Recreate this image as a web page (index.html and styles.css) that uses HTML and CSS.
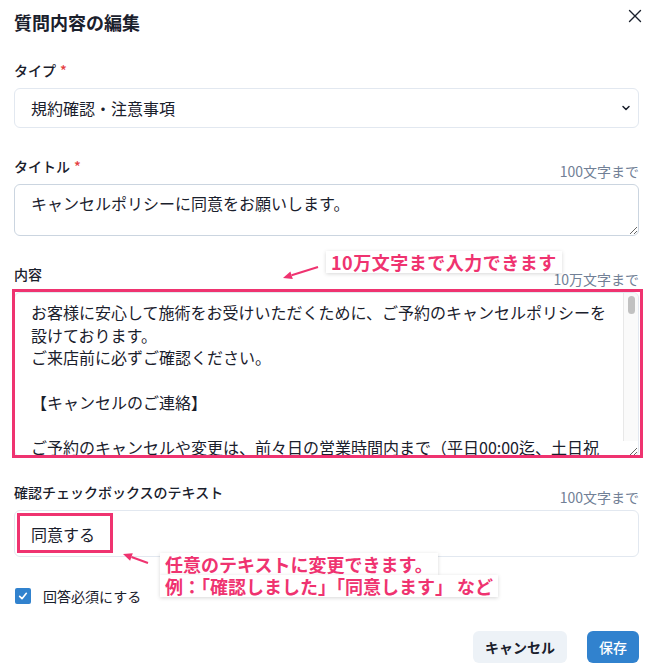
FILE: index.html
```html
<!DOCTYPE html>
<html lang="ja">
<head>
<meta charset="utf-8">
<title>質問内容の編集</title>
<link rel="stylesheet" href="styles.css">
</head>
<body>
<div class="modal">
  <header class="modal-header">
    <h2 class="modal-title">質問内容の編集</h2>
    <button class="close" aria-label="閉じる">
      <svg width="14" height="14" viewBox="0 0 14 14"><path d="M1.5 1.5 L12.5 12.5 M12.5 1.5 L1.5 12.5" stroke="#1a202c" stroke-width="1.4" fill="none" stroke-linecap="round"/></svg>
    </button>
  </header>

  <div class="field field-first">
    <div class="label-row"><span class="label">タイプ<span class="req">*</span></span></div>
    <div class="select">
      <span>規約確認・注意事項</span>
      <svg class="chevron" width="12" height="12" viewBox="0 0 12 12"><path d="M3 4.5 L6 7.5 L9 4.5" stroke="#1a202c" stroke-width="1.5" fill="none" stroke-linecap="round" stroke-linejoin="round"/></svg>
    </div>
  </div>

  <div class="field">
    <div class="label-row"><span class="label">タイトル<span class="req">*</span></span><span class="counter">100文字まで</span></div>
    <textarea class="area title-area">キャンセルポリシーに同意をお願いします。</textarea>
  </div>

  <div class="field">
    <div class="label-row"><span class="label">内容</span><span class="counter">10万文字まで</span></div>
    <div class="content-wrap">
      <textarea class="area content-area">お客様に安心して施術をお受けいただくために、ご予約のキャンセルポリシーを設けております。
ご来店前に必ずご確認ください。

【キャンセルのご連絡】

ご予約のキャンセルや変更は、前々日の営業時間内まで（平日00:00迄、土日祝日は18:00迄）にご連絡をお願いいたします。
ご連絡はお電話、またはWEB予約ページのマイページより承っております。
営業時間外にいただいたご連絡は、翌営業日の受付となりますのでご注意ください。

【キャンセル料について】

・前日のキャンセル：施術料金の50％
・当日のキャンセル：施術料金の100％
・無断キャンセル：施術料金の100％
・ご予約時間から15分以上の遅刻：当日キャンセル扱い

キャンセル料は、次回ご来店時にお支払いいただくか、指定の口座へお振込みをお願いいたします。
お振込み手数料はお客様のご負担となります。

【遅刻について】

ご予約のお時間に遅れる場合は、必ず事前にご連絡ください。
遅刻された場合、次のお客様のご予約状況により施術時間を短縮させていただく場合がございます。
その場合でも、施術料金は通常どおり頂戴いたします。
15分以上遅れる場合は、ご予約をキャンセルまたは変更させていただくことがございます。

【日時の変更について】

ご予約日時の変更は、前々日までであれば無料で承ります。
前日・当日の変更は、キャンセル扱いとなりますのでご了承ください。
変更は1回のご予約につき1度までとさせていただきます。

【体調不良・悪天候の場合】

急な体調不良や、台風・大雪などの悪天候により公共交通機関が運休した場合は、キャンセル料はいただきません。
その際は、わかる範囲で早めにご連絡をお願いいたします。
感染症の疑いがある場合は、ご来店をお控えいただきますようお願いいたします。

【回数券・コースをご利用のお客様】

回数券・コースをご利用中のお客様が当日キャンセルまたは無断キャンセルされた場合は、1回分を消化とさせていただきます。
有効期限の延長はいたしかねますので、あらかじめご了承ください。

【その他】

無断キャンセルが2回以上続いた場合、今後のご予約をお断りさせていただく場合がございます。
やむを得ず当店の都合によりご予約を変更させていただく場合は、事前にご連絡いたします。
本ポリシーの内容は予告なく変更する場合がございます。最新の内容は当店ホームページをご確認ください。

ご理解とご協力のほど、よろしくお願いいたします。</textarea>
      <div class="scrollbar"><div class="scroll-thumb"></div></div>
    </div>
  </div>

  <div class="field field-after-content">
    <div class="label-row"><span class="label">確認チェックボックスのテキスト</span><span class="counter">100文字まで</span></div>
    <div class="input-wrap">
      <input class="text-input" type="text" value="同意する">
      <span class="mark-box"></span>
    </div>
  </div>

  <label class="check-row">
    <span class="checkbox">
      <svg width="10" height="10" viewBox="0 0 12 12"><path d="M2 6.5 L4.8 9.2 L10 2.8" stroke="#fff" stroke-width="2" fill="none" stroke-linecap="round" stroke-linejoin="round"/></svg>
    </span>
    <span class="check-label">回答必須にする</span>
  </label>

  <footer class="modal-footer">
    <button class="btn btn-cancel">キャンセル</button>
    <button class="btn btn-save">保存</button>
  </footer>
</div>

<div class="callout callout-limit"><span class="callout-line">10万文字まで入力できます</span></div>
<div class="callout callout-text">
  <span class="callout-line">任意のテキストに変更できます。</span>
  <span class="callout-line">例：「確認しました」「同意します」 など</span>
</div>
<svg class="arrows" width="652" height="672" viewBox="0 0 652 672">
  <line x1="318" y1="267" x2="291.6" y2="275.3" stroke="#ef3370" stroke-width="2"/>
  <polygon points="283,278 292.8,279.1 290.4,271.5" fill="#ef3370"/>
  <line x1="148" y1="563" x2="131.5" y2="557" stroke="#ef3370" stroke-width="2"/>
  <polygon points="123,554 132.8,553.2 130.1,560.8" fill="#ef3370"/>
</svg>
</body>
</html>
```

FILE: styles.css
```css
* { box-sizing: border-box; }
html, body { margin: 0; background: #fff; }
body {
  font-family: "Noto Sans CJK JP", "Noto Sans", sans-serif;
  color: #1a202c;
  width: 652px;
  height: 672px;
  overflow: hidden;
  position: relative;
}
.modal { padding: 0 13px 0 14px; }
.modal-header { height: 44px; display: flex; align-items: center; }
.modal-title { margin: 0; font-size: 18px; font-weight: 700; line-height: 44px; }
.close {
  position: absolute; top: 9px; right: 10px;
  width: 14px; height: 14px; padding: 0; border: 0; background: none;
  display: flex;
}
.field { margin-top: 28px; }
.field-first { margin-top: 16px; }
.field-after-content { margin-top: 25px; }
.label-row {
  display: flex; justify-content: space-between; align-items: flex-end;
  margin-bottom: 3px;
}
.label { font-size: 14px; font-weight: 500; line-height: 20px; margin-bottom: 5px; }
.req { color: #e53e3e; margin-left: 4px; }
.counter { font-size: 14px; line-height: 20px; color: #718096; }
.select {
  height: 40px; border: 1px solid #e2e8f0; border-radius: 6px;
  display: flex; align-items: center; justify-content: space-between;
  padding: 0 6px 0 16px; font-size: 16px;
}
.area {
  display: block; width: 100%; margin: 0;
  font-family: inherit; font-size: 16px; color: #1a202c; line-height: 23px;
  border: 1px solid #e2e8f0; border-radius: 6px;
  padding: 8px 16px; resize: vertical; background: #fff;
}
.title-area { height: 52px; border-color: #cbd5e0; padding-top: 7px; }
.content-wrap { position: relative; }
.content-wrap::after {
  content: ""; position: absolute;
  top: -3px; right: -4px; bottom: -1px; left: -2px;
  border: 3px solid #ef3370; pointer-events: none;
}
.content-area { height: 165px; padding-right: 29px; line-height: 22.5px; overflow: hidden; }
.scrollbar {
  position: absolute; top: 1px; right: 1px; bottom: 16px; width: 15px;
  background: #fafafa; border-left: 1px solid #e8e8e8; border-top-right-radius: 5px;
  padding: 3px 3px 0 4px;
}
.scroll-thumb { width: 7px; height: 18px; border-radius: 4px; background: #c1c1c1; }
.input-wrap { position: relative; }
.text-input {
  display: block; width: 100%; height: 47px; margin: 0;
  border: 1px solid #e2e8f0; border-radius: 6px;
  padding: 0 16px; font-family: inherit; font-size: 16px; color: #1a202c;
}
.mark-box {
  position: absolute; left: 3px; top: 3px; width: 96px; height: 40px;
  border: 3px solid #ef3370;
}
.check-row { display: flex; align-items: center; gap: 12px; margin-top: 29px; height: 20px; padding-left: 1px; }
.checkbox {
  width: 16px; height: 16px; border-radius: 2px; background: #3182ce;
  display: flex; align-items: center; justify-content: center;
}
.check-label { font-size: 14px; line-height: 20px; }
.modal-footer { display: flex; justify-content: flex-end; gap: 20px; margin-top: 25px; }
.btn {
  height: 32px; padding: 0 12px; border: 0; border-radius: 6px;
  font-family: inherit; font-size: 14px; font-weight: 700;
}
.btn-cancel { background: #edf2f7; color: #1a202c; }
.btn-save { background: #3182ce; color: #fff; font-weight: 500; }

.callout { position: absolute; color: #ef3370; font-weight: 700; font-size: 18px; line-height: 22px; }
.callout-line {
  display: block; width: fit-content; background: #fff; padding: 0 5px;
  box-shadow: 0 1px 4px rgba(0, 0, 0, 0.16);
}
.callout-limit { left: 326px; top: 251px; letter-spacing: 0.5px; }
.callout-text { left: 160px; top: 553px; }
.arrows { position: absolute; left: 0; top: 0; pointer-events: none; }
```
